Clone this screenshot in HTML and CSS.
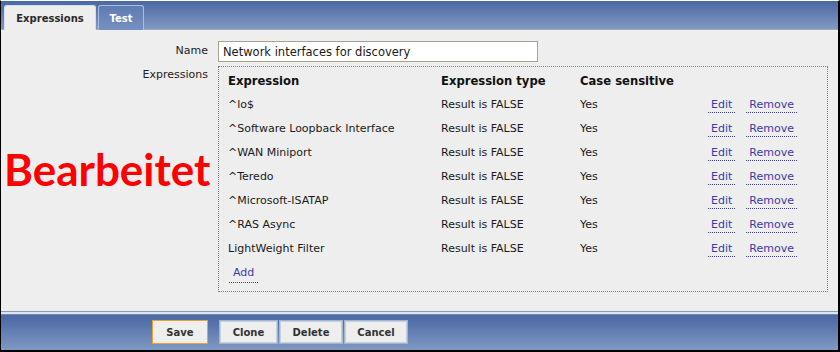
FILE: index.html
```html
<!DOCTYPE html>
<html>
<head>
<meta charset="utf-8">
<link rel="stylesheet" href="styles.css">
</head>
<body>
<div class="frame">
  <div class="header">
    <div class="tabs">
      <div class="tab active">Expressions</div>
      <div class="tab">Test</div>
    </div>
  </div>
  <div class="content">
    <div class="form-row">
      <div class="label">Name</div>
      <div class="field"><input class="text-input" type="text" value="Network interfaces for discovery"></div>
    </div>
    <div class="form-row">
      <div class="label label-top">Expressions</div>
      <div class="field">
        <div class="box">
          <table class="expr">
            <thead>
              <tr><th class="c1">Expression</th><th class="c2">Expression type</th><th class="c3">Case sensitive</th><th class="c4"></th></tr>
            </thead>
            <tbody>
              <tr><td>^lo$</td><td>Result is FALSE</td><td>Yes</td><td class="acts"><a class="lnk">Edit</a><a class="lnk">Remove</a></td></tr>
              <tr><td>^Software Loopback Interface</td><td>Result is FALSE</td><td>Yes</td><td class="acts"><a class="lnk">Edit</a><a class="lnk">Remove</a></td></tr>
              <tr><td>^WAN Miniport</td><td>Result is FALSE</td><td>Yes</td><td class="acts"><a class="lnk">Edit</a><a class="lnk">Remove</a></td></tr>
              <tr><td>^Teredo</td><td>Result is FALSE</td><td>Yes</td><td class="acts"><a class="lnk">Edit</a><a class="lnk">Remove</a></td></tr>
              <tr><td>^Microsoft-ISATAP</td><td>Result is FALSE</td><td>Yes</td><td class="acts"><a class="lnk">Edit</a><a class="lnk">Remove</a></td></tr>
              <tr><td>^RAS Async</td><td>Result is FALSE</td><td>Yes</td><td class="acts"><a class="lnk">Edit</a><a class="lnk">Remove</a></td></tr>
              <tr><td>LightWeight Filter</td><td>Result is FALSE</td><td>Yes</td><td class="acts"><a class="lnk">Edit</a><a class="lnk">Remove</a></td></tr>
              <tr><td colspan="4"><a class="lnk add">Add</a></td></tr>
            </tbody>
          </table>
        </div>
      </div>
    </div>
  </div>
  <div class="footer">
    <button class="btn primary">Save</button>
    <div class="btn-group">
      <button class="btn">Clone</button>
      <button class="btn">Delete</button>
      <button class="btn">Cancel</button>
    </div>
  </div>
  <div class="stamp">Bearbeitet</div>
</div>
</body>
</html>
```

FILE: styles.css
```css
* { box-sizing: border-box; }
html, body { margin: 0; padding: 0; background: #ffffff; }
body { font-family: "DejaVu Sans", Verdana, sans-serif; font-size: 11px; color: #1a1a1a; }

.frame {
  position: relative;
  width: 840px;
  height: 352px;
  border-top: 1px solid #ffffff;
  border-left: 1px solid #000;
  border-right: 2px solid #000;
  border-bottom: 2px solid #000;
  background: #eeeeee;
  display: flex;
  flex-direction: column;
}

.header {
  height: 29px;
  background: linear-gradient(#4a68a3, #8199c2);
  border-bottom: 1px solid #a2aab8;
  display: flex;
  align-items: flex-end;
  padding-left: 3px;
}
.tabs { display: flex; gap: 2px; margin-bottom: -1px; }
.tab {
  height: 25px;
  width: 46px;
  display: flex;
  align-items: center;
  justify-content: center;
  font-weight: bold;
  font-size: 10px;
  color: #ffffff;
  background: linear-gradient(#5f7cb2, #7690c0);
  border: 1px solid #a9bde0;
  border-bottom: none;
  border-radius: 3px 3px 0 0;
}
.tab.active {
  background: #eeeeee;
  color: #2a2a2a;
  border-color: #d8dde8;
  width: 92px;
}

.content { flex: 1; padding-top: 11px; }
.form-row { display: flex; gap: 10px; margin-bottom: 4px; }
.label {
  width: 207px;
  text-align: right;
  line-height: 20px;
  color: #222;
}
.label-top { line-height: 18px; }
.text-input {
  width: 320px;
  height: 21px;
  border: 1px solid #a6a38f;
  background: #fff;
  padding: 0 4px;
  font-family: "DejaVu Sans", Verdana, sans-serif;
  font-size: 11.5px;
  color: #1a1a1a;
  margin: 0;
  outline: none;
}

.box {
  width: 610px;
  height: 226px;
  border: 1px dotted #7a7a7a;
  padding: 1px 9px 0 9px;
}
.expr { border-collapse: collapse; width: 100%; }
.expr th, .expr td { padding: 0; height: 24px; text-align: left; vertical-align: middle; white-space: nowrap; }
.expr th { font-size: 11.6px; font-weight: bold; color: #111; padding-top: 1px; }
.c1 { width: 213px; }
.c2 { width: 139px; }
.c3 { width: 128px; }
.acts { padding-left: 0; }
.lnk {
  color: #3b3ba0;
  border-bottom: 1px dotted #3b3ba0;
  padding: 0 3px 1px 3px;
  margin-right: 11px;
  cursor: pointer;
}
.add { margin-left: 1px; padding: 0 4px 3px 4px; }

.footer {
  height: 39px;
  border-top: 1px solid #8a9ab4;
  box-shadow: inset 0 1px 0 #dfe5ee, inset 0 2px 0 #dfe5ee, inset 0 3px 0 #7089b3;
  background: linear-gradient(#4b69a4 8%, #5572ab 30%, #8199c3);
  display: flex;
  align-items: flex-start;
  padding: 8px 0 0 151px;
  gap: 11px;
}
.btn-group { display: flex; gap: 1px; }
.btn {
  height: 24px;
  margin: 0;
  font-family: "DejaVu Sans", Verdana, sans-serif;
  font-size: 10px;
  font-weight: bold;
  color: #333;
  background: #eeeeee;
  border: 1px solid #a5b4cc;
  box-shadow: inset 0 0 0 1px #c4cfe0;
  padding: 0 12px;
  border-radius: 0;
}
.btn.primary {
  width: 56px;
  border-color: #f0a030;
  box-shadow: none;
}
.btn-group .btn:nth-child(1) { width: 59px; }
.btn-group .btn:nth-child(2) { width: 64px; }
.btn-group .btn:nth-child(3) { width: 64px; }

.stamp {
  position: absolute;
  left: 3px;
  top: 140px;
  font-family: Lato, "Open Sans", sans-serif;
  font-weight: bold;
  font-size: 44px;
  color: #ff0000;
  line-height: 56px;
}
```
